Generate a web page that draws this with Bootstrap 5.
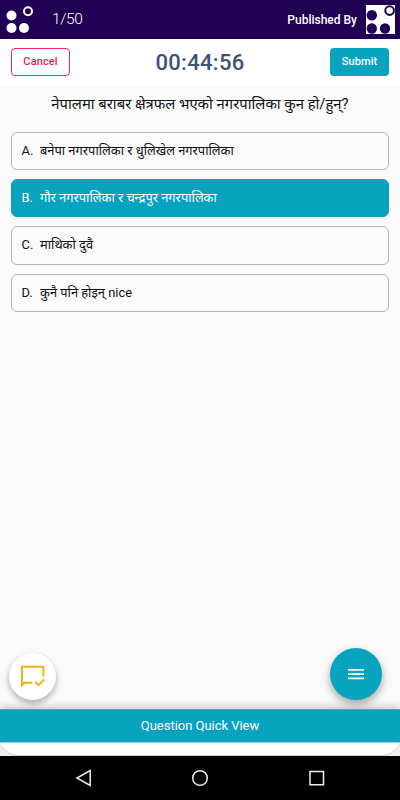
<!DOCTYPE html>
<html lang="ne">
<head>
<meta charset="utf-8">
<meta name="viewport" content="width=device-width, initial-scale=1">
<title>Quiz</title>
<link href="https://cdn.jsdelivr.net/npm/bootstrap@5.3.0/dist/css/bootstrap.min.css" rel="stylesheet">
<style>
body{font-family:Roboto,"Noto Sans","Noto Sans Devanagari",sans-serif;background:#fafafa;color:#111;height:800px;overflow:hidden}
svg{display:block;flex:none}
.top-bar{height:39px;background:#210053;color:#fff;padding:0 5px 0 6px}
.progress-count{font-size:15.5px;font-weight:300;margin-left:18px;letter-spacing:-.35px}
.published{font-size:12px;font-weight:500;margin-right:9px}
.action-bar{height:46px;background:#fff;padding:0 11px}
.action-bar .btn{height:28px;font-size:11px;font-weight:500;padding:0;border-radius:4px;letter-spacing:.1px}
.btn-cancel{width:59px;border:1px solid #f0265c;color:#e91e55}
.btn-submit{width:59px;background:#08a3bf;color:#fff}
.timer{font-size:22px;font-weight:500;color:#3c5373;letter-spacing:.3px}
.question{font-size:14.85px;line-height:20px;margin-top:9px;margin-bottom:18px}
.options{gap:9px;padding:0 11px}
.option{height:38.2px;border:1px solid #b5b5b5;border-radius:6px;font-size:12.9px;line-height:18px;padding:0 9.5px}
.option.chosen{background:#08a3bf;border-color:#08a3bf;color:#fff}
.option .key{width:18.5px}
.fabs{padding:0 18px 9px 9px}
.fab{border-radius:50%}
.fab-report{width:47px;height:47px;background:#fff;box-shadow:0 3px 6px rgba(0,0,0,.32)}
.fab-menu{width:52px;height:52px;background:#08a3bf;box-shadow:0 4px 8px rgba(0,0,0,.35)}
.sheet-wrap{height:47px;background:#eee;box-shadow:0 -2px 8px rgba(0,0,0,.22)}
.sheet{height:47px;background:#fff;border-radius:0 0 18px 18px;border-bottom:1px solid #ccc}
.quick-view{height:34px;background:#08a3bf;color:#fff;font-size:13px;letter-spacing:-.03px;border-top:1px solid #58a5b1;border-bottom:1px solid #9cced8}
.system-nav{height:44px;background:#000}
</style>
</head>
<body class="d-flex flex-column">
<header class="top-bar d-flex align-items-center flex-shrink-0">
  <svg width="28" height="39" viewBox="0 0 28 39"><g fill="#fff"><circle cx="5.5" cy="15.5" r="5"/><circle cx="5.5" cy="28" r="5"/><circle cx="18" cy="28" r="5"/></g><circle cx="22" cy="11.3" r="4" fill="none" stroke="#fff" stroke-width="2"/></svg>
  <span class="progress-count">1/50</span>
  <span class="published ms-auto">Published By</span>
  <svg width="29" height="29" viewBox="0 0 29 29"><path d="M0 0h29v29H0z" fill="#fff"/><g fill="#210053"><circle cx="5.8" cy="10.3" r="5.2"/><circle cx="5.8" cy="23.5" r="5.2"/><circle cx="19" cy="23.5" r="5.2"/></g><circle cx="23.6" cy="5.6" r="4.3" fill="none" stroke="#210053" stroke-width="2"/></svg>
</header>
<div class="action-bar d-flex justify-content-between align-items-center flex-shrink-0">
  <button class="btn btn-cancel">Cancel</button>
  <span class="timer">00:44:56</span>
  <button class="btn btn-submit">Submit</button>
</div>
<main class="flex-grow-1 d-flex flex-column">
  <h1 class="question text-center fw-normal">नेपालमा बराबर क्षेत्रफल भएको नगरपालिका कुन हो/हुन्?</h1>
  <div class="options d-flex flex-column">
    <div class="option d-flex align-items-center"><span class="key">A.</span><span>बनेपा नगरपालिका र धुलिखेल नगरपालिका</span></div>
    <div class="option chosen d-flex align-items-center"><span class="key">B.</span><span>गौर नगरपालिका र चन्द्रपुर नगरपालिका</span></div>
    <div class="option d-flex align-items-center"><span class="key">C.</span><span>माथिको दुवै</span></div>
    <div class="option d-flex align-items-center"><span class="key">D.</span><span>कुनै पनि होइन् nice</span></div>
  </div>
  <div class="fabs d-flex justify-content-between align-items-end mt-auto">
    <div class="fab fab-report d-flex align-items-center justify-content-center">
      <svg width="26" height="26" viewBox="0 0 26 26" fill="none" stroke="#fbb016" stroke-width="2"><path d="M23.4 12.5V2.7H2V21l3-2.2h7.5"/><path d="M1 18h5l-5 5.5z" fill="#fbb016" stroke="none"/><path d="m15.2 17.7 3.4 3.4 5.7-5.7"/></svg>
    </div>
    <div class="fab fab-menu d-flex align-items-center justify-content-center">
      <svg width="16" height="12" viewBox="0 0 16 12" stroke="#fff" stroke-width="1.8"><path d="M0 1.9h16M0 6.1h16M0 10.3h16"/></svg>
    </div>
  </div>
</main>
<div class="sheet-wrap flex-shrink-0">
  <div class="sheet"><div class="quick-view d-flex align-items-center justify-content-center">Question Quick View</div></div>
</div>
<nav class="system-nav flex-shrink-0 d-flex align-items-center justify-content-center">
  <svg width="250" height="20" viewBox="0 0 250 20" fill="none" stroke="#eee" stroke-width="1.5"><path d="M15.2 2.5v15L1.9 10z"/><circle cx="125" cy="10" r="7.3"/><path d="M235 3.5h13.5v13.3H235z"/></svg>
</nav>
<script src="https://cdn.jsdelivr.net/npm/bootstrap@5.3.0/dist/js/bootstrap.bundle.min.js"></script>
</body>
</html>
